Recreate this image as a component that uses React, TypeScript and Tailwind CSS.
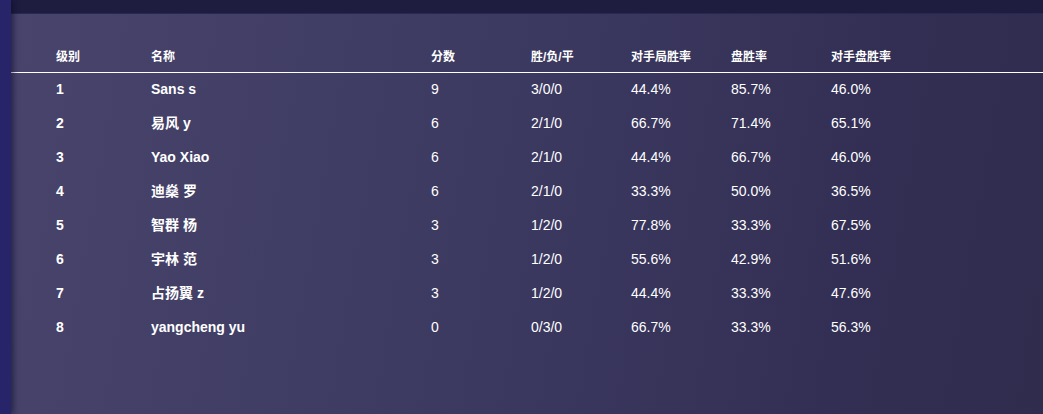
const rows = [
  { rank: 1, name: "Sans s", score: 9, wdl: "3/0/0", opp: "44.4%", set: "85.7%", oppSet: "46.0%" },
  { rank: 2, name: "易风 y", score: 6, wdl: "2/1/0", opp: "66.7%", set: "71.4%", oppSet: "65.1%" },
  { rank: 3, name: "Yao Xiao", score: 6, wdl: "2/1/0", opp: "44.4%", set: "66.7%", oppSet: "46.0%" },
  { rank: 4, name: "迪燊 罗", score: 6, wdl: "2/1/0", opp: "33.3%", set: "50.0%", oppSet: "36.5%" },
  { rank: 5, name: "智群 杨", score: 3, wdl: "1/2/0", opp: "77.8%", set: "33.3%", oppSet: "67.5%" },
  { rank: 6, name: "宇林 范", score: 3, wdl: "1/2/0", opp: "55.6%", set: "42.9%", oppSet: "51.6%" },
  { rank: 7, name: "占扬翼 z", score: 3, wdl: "1/2/0", opp: "44.4%", set: "33.3%", oppSet: "47.6%" },
  { rank: 8, name: "yangcheng yu", score: 0, wdl: "0/3/0", opp: "66.7%", set: "33.3%", oppSet: "56.3%" },
];

const headers = ["级别", "名称", "分数", "胜/负/平", "对手局胜率", "盘胜率", "对手盘胜率"];

export default function App() {
  return (
    <div
      className="flex h-[414px] w-[1043px] overflow-hidden text-white"
      style={{ fontFamily: '"Liberation Sans", Arial, "Noto Sans CJK SC", sans-serif' }}
    >
      <aside className="w-[11px] shrink-0 bg-[#27246a] shadow-[2px_0_6px_rgba(10,8,40,0.6)] z-10" />
      <main className="flex flex-1 flex-col bg-[linear-gradient(100deg,#48446c_0%,#3d3a62_45%,#332f54_80%,#2f2c4e_100%)]">
        <div className="h-[14px] shrink-0 border-b border-[#2a2850] bg-[#1f1d3f]" />
        <div className="pt-[26px]">
          <table className="w-full table-fixed border-collapse">
            <colgroup>
              <col className="w-[140px]" />
              <col className="w-[280px]" />
              <col className="w-[100px]" />
              <col className="w-[100px]" />
              <col className="w-[100px]" />
              <col className="w-[100px]" />
              <col />
            </colgroup>
            <thead>
              <tr className="h-[32px] border-b border-white">
                {headers.map((h, i) => (
                  <th
                    key={h}
                    className={`pt-[3px] text-left align-middle text-[12px] font-bold leading-none ${i === 0 ? "pl-[45px]" : ""}`}
                  >
                    {h}
                  </th>
                ))}
              </tr>
            </thead>
            <tbody>
              {rows.map(r => (
                <tr key={r.rank} className="h-[34px] text-[14px]">
                  <td className="pl-[45px] font-bold">{r.rank}</td>
                  <td className="font-bold">{r.name}</td>
                  <td>{r.score}</td>
                  <td>{r.wdl}</td>
                  <td>{r.opp}</td>
                  <td>{r.set}</td>
                  <td>{r.oppSet}</td>
                </tr>
              ))}
            </tbody>
          </table>
        </div>
      </main>
    </div>
  );
}
